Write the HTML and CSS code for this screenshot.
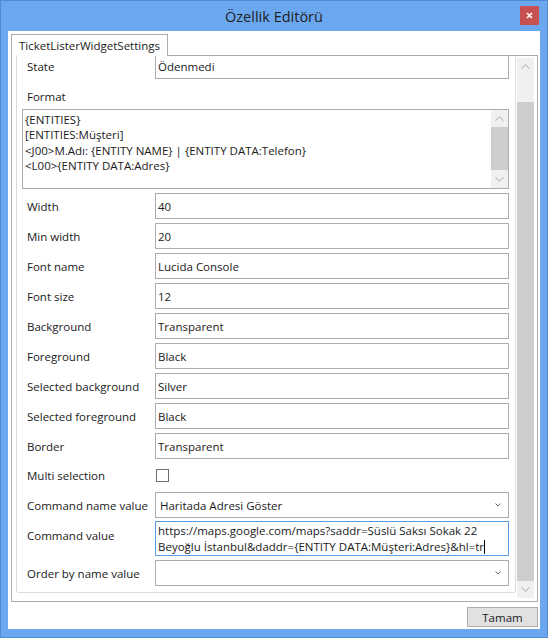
FILE: index.html
```html
<!DOCTYPE html>
<html lang="tr">
<head>
<meta charset="utf-8">
<title>Özellik Editörü</title>
<link rel="stylesheet" href="styles.css">
</head>
<body>
<div class="window">
  <div class="titlebar">
    <span class="title">Özellik Editörü</span>
    <div class="close">
      <svg width="7" height="7" viewBox="0 0 7 7"><path d="M1 1 L6 6 M6 1 L1 6" stroke="#fff" stroke-width="1.6" fill="none"/></svg>
    </div>
  </div>
  <div class="client">
    <div class="tabs"><div class="tab">TicketListerWidgetSettings</div></div>
    <div class="panel">
      <div class="grid-area">
        <div class="scroll-content">
          <div class="label">State</div>
          <div class="field">Ödenmedi</div>

          <div class="format-block">
            <div class="label">Format</div>
            <div class="textarea">
              <div class="ta-text">{ENTITIES}<br>[ENTITIES:Müşteri]<br>&lt;J00&gt;M.Adı: {ENTITY NAME} | {ENTITY DATA:Telefon}<br>&lt;L00&gt;{ENTITY DATA:Adres}</div>
              <div class="sb small">
                <div class="sb-btn"><svg width="9" height="5" viewBox="0 0 9 5"><polyline points="0.5,4.5 4.5,0.8 8.5,4.5" fill="none" stroke="#a6a6a6" stroke-width="1"/></svg></div>
                <div class="sb-thumb ta-thumb"></div>
                <div class="sb-fill"></div>
                <div class="sb-btn"><svg width="9" height="5" viewBox="0 0 9 5"><polyline points="0.5,0.5 4.5,4.2 8.5,0.5" fill="none" stroke="#a6a6a6" stroke-width="1"/></svg></div>
              </div>
            </div>
          </div>

          <div class="label">Width</div>
          <div class="field">40</div>
          <div class="label">Min width</div>
          <div class="field">20</div>
          <div class="label">Font name</div>
          <div class="field">Lucida Console</div>
          <div class="label">Font size</div>
          <div class="field">12</div>
          <div class="label">Background</div>
          <div class="field">Transparent</div>
          <div class="label">Foreground</div>
          <div class="field">Black</div>
          <div class="label">Selected background</div>
          <div class="field">Silver</div>
          <div class="label">Selected foreground</div>
          <div class="field">Black</div>
          <div class="label">Border</div>
          <div class="field">Transparent</div>

          <div class="label label-check">Multi selection</div>
          <div class="check-cell"><div class="checkbox"></div></div>

          <div class="label">Command name value</div>
          <div class="combo"><span class="combo-text">Haritada Adresi Göster</span><svg class="chev" width="6" height="4" viewBox="0 0 6 4"><polyline points="0.5,0.5 3,3 5.5,0.5" fill="none" stroke="#6d6d6d" stroke-width="1"/></svg></div>

          <div class="label">Command value</div>
          <div class="field multi focused">https://maps.google.com/maps?saddr=Süslü Saksı Sokak 22<br>Beyoğlu İstanbul&amp;daddr={ENTITY DATA:Müşteri:Adres}&amp;hl=tr<span class="caret"></span></div>

          <div class="label">Order by name value</div>
          <div class="combo"><span class="combo-text"></span><svg class="chev" width="6" height="4" viewBox="0 0 6 4"><polyline points="0.5,0.5 3,3 5.5,0.5" fill="none" stroke="#6d6d6d" stroke-width="1"/></svg></div>
        </div>
      </div>
      <div class="sb main">
        <div class="sb-btn"><svg width="9" height="5" viewBox="0 0 9 5"><polyline points="0.5,4.5 4.5,0.8 8.5,4.5" fill="none" stroke="#a6a6a6" stroke-width="1"/></svg></div>
        <div class="sb-gap"></div>
        <div class="sb-thumb main-thumb"></div>
        <div class="sb-fill"></div>
        <div class="sb-btn"><svg width="9" height="5" viewBox="0 0 9 5"><polyline points="0.5,0.5 4.5,4.2 8.5,0.5" fill="none" stroke="#a6a6a6" stroke-width="1"/></svg></div>
      </div>
    </div>
    <div class="footer"><button class="btn" type="button">Tamam</button></div>
  </div>
</div>
</body>
</html>
```

FILE: styles.css
```css
* { box-sizing: border-box; }
html, body { margin: 0; padding: 0; }
body {
  width: 548px;
  height: 638px;
  overflow: hidden;
  font-family: "Open Sans", "Noto Sans", sans-serif;
  font-size: 11.5px;
  color: #1a1a1a;
}
.window {
  width: 548px;
  height: 638px;
  background: #6ba7ee;
  box-shadow: inset 0 0 0 1px #4e89d4;
  display: flex;
  flex-direction: column;
  padding: 0 8px 9px 8px;
}
.titlebar {
  height: 31px;
  flex: none;
  display: grid;
  grid-template-columns: 1fr auto 1fr;
  align-items: center;
}
.title {
  grid-column: 2;
  font-size: 14.5px;
  color: #1e1e1e;
  padding-top: 1px;
}
.close {
  grid-column: 3;
  justify-self: end;
  align-self: start;
  margin-top: 6px;
  margin-right: 1px;
  width: 19px;
  height: 19px;
  background: #c75050;
  display: flex;
  align-items: center;
  justify-content: center;
}
.client {
  flex: 1;
  background: #fff;
  display: flex;
  flex-direction: column;
  padding: 3px 2px 0 3px;
}
.tabs {
  display: flex;
  flex: none;
  z-index: 1;
  margin-bottom: -1px;
}
.tab {
  height: 22px;
  border: 1px solid #acacac;
  border-bottom: none;
  background: #fff;
  padding: 0 7px;
  display: flex;
  align-items: center;
  white-space: nowrap;
}
.panel {
  height: 547px;
  flex: none;
  border: 1px solid #acacac;
  display: flex;
  align-items: flex-start;
}
.grid-area {
  margin-left: 4px;
  width: 500px;
  height: 537px;
  border: 1px solid #dcdcdc;
  border-top: none;
  border-radius: 0 0 3px 3px;
  overflow: hidden;
}
.scroll-content {
  margin-top: -3px;
  padding-left: 10px;
  display: grid;
  grid-template-columns: 128px 354px;
  row-gap: 4px;
  align-items: start;
}
.label {
  white-space: nowrap;
  height: 26px;
  display: flex;
  align-items: center;
}
.label-check { height: 25px; }
.field {
  height: 26px;
  border: 1px solid #abadb3;
  padding: 0 0 0 2px;
  display: flex;
  align-items: center;
  white-space: nowrap;
  background: #fff;
}
.format-block {
  grid-column: 1 / -1;
  height: 106px;
  display: flex;
  flex-direction: column;
}
.textarea {
  margin-left: -5px;
  width: 487px;
  height: 80px;
  border: 1px solid #abadb3;
  display: flex;
  justify-content: space-between;
}
.ta-text {
  padding: 2px 0 0 2px;
  line-height: 15.3px;
  white-space: nowrap;
}
.sb {
  display: flex;
  flex-direction: column;
  background: #f0f0f0;
  width: 17px;
  flex: none;
}
.sb.small { height: 78px; }
.sb.main {
  margin-left: 1px;
  margin-top: 2px;
  height: 540px;
}
.sb-btn {
  height: 17px;
  flex: none;
  display: flex;
  align-items: center;
  justify-content: center;
}
.sb-thumb { background: #cdcdcd; flex: none; }
.ta-thumb { height: 43px; }
.main-thumb { height: 479px; }
.sb-gap { height: 27px; flex: none; }
.sb-fill { flex: 1; }
.check-cell {
  height: 25px;
  display: flex;
  align-items: center;
}
.checkbox {
  width: 13px;
  height: 13px;
  border: 1px solid #707070;
  margin-left: 1px;
  background: #fff;
}
.combo {
  height: 26px;
  border: 1px solid #acacac;
  display: flex;
  align-items: center;
  justify-content: space-between;
  padding: 0 7px 0 4px;
  background: #fff;
  white-space: nowrap;
}
.chev { flex: none; }
.field.multi {
  height: 35px;
  margin-top: -1px;
  display: block;
  line-height: 16px;
  padding-top: 1px;
}
.field.focused { border-color: #569de5; }
.caret {
  display: inline-block;
  width: 1px;
  height: 14px;
  background: #000;
  vertical-align: -3px;
}
.footer {
  flex: none;
  display: flex;
  justify-content: flex-end;
  padding-top: 5px;
}
.btn {
  width: 71px;
  height: 20px;
  background: #e1e1e1;
  border: 1px solid #adadad;
  font-family: inherit;
  font-size: 11.5px;
  color: #1a1a1a;
  padding: 0;
  margin: 0;
}
```
